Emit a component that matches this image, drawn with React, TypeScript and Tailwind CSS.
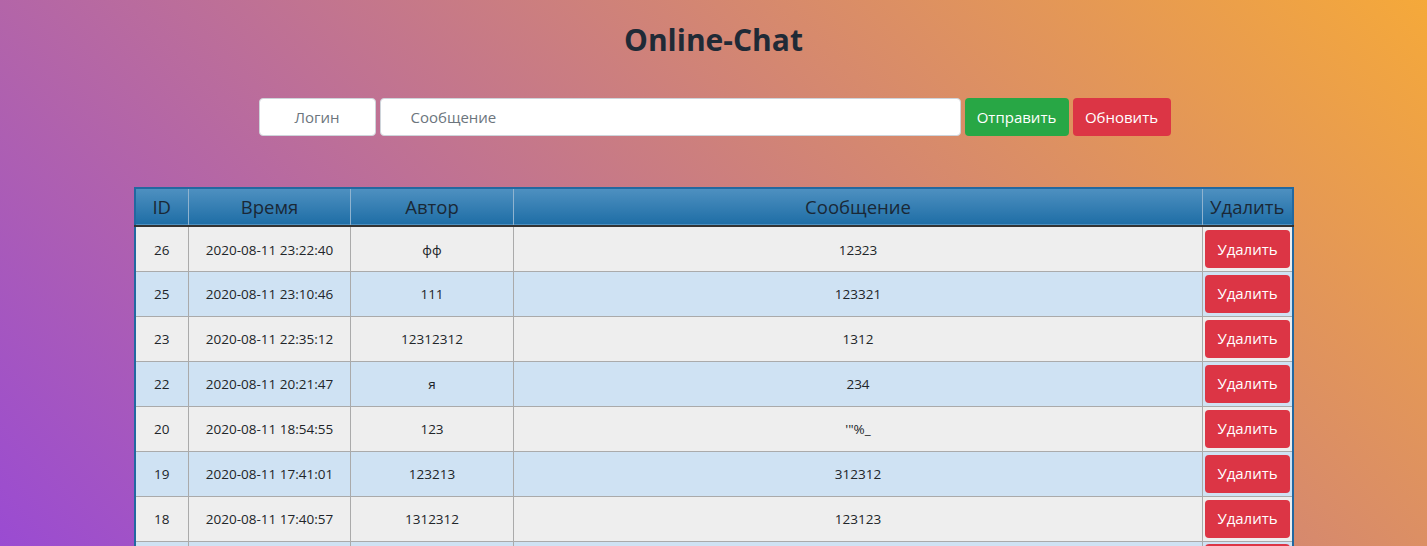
import React from "react";

interface Message {
  id: number;
  time: string;
  author: string;
  text: string;
}

const messages: Message[] = [
  { id: 26, time: "2020-08-11 23:22:40", author: "фф", text: "12323" },
  { id: 25, time: "2020-08-11 23:10:46", author: "111", text: "123321" },
  { id: 23, time: "2020-08-11 22:35:12", author: "12312312", text: "1312" },
  { id: 22, time: "2020-08-11 20:21:47", author: "я", text: "234" },
  { id: 20, time: "2020-08-11 18:54:55", author: "123", text: "'\"%_" },
  { id: 19, time: "2020-08-11 17:41:01", author: "123213", text: "312312" },
  { id: 18, time: "2020-08-11 17:40:57", author: "1312312", text: "123123" },
];

export default function App() {
  return (
    <div className="h-screen overflow-hidden bg-[linear-gradient(45deg,#9a4bd2,#f5a93a)] font-['Open_Sans',sans-serif] text-[#212529]">
      <h1 className="pt-[19px] text-center text-[30px] font-bold leading-[42px] text-[#1f2a36]">
        Online-Chat
      </h1>

      <div className="mt-[37px] flex justify-center gap-1 pl-[2px]">
        <input
          placeholder="Логин"
          className="h-[38px] w-[117px] rounded border border-[#ced4da] bg-white text-center text-[15px] text-[#495057] placeholder:text-[#6c757d] outline-none"
        />
        <input
          placeholder="Сообщение"
          className="h-[38px] w-[581px] rounded border border-[#ced4da] bg-white pl-[30px] text-[15px] text-[#495057] placeholder:text-[#6c757d] outline-none"
        />
        <button className="h-[38px] w-[104px] rounded bg-[#28a745] text-[15px] text-white">
          Отправить
        </button>
        <button className="h-[38px] w-[98px] rounded bg-[#dc3545] text-[15px] text-white">
          Обновить
        </button>
      </div>

      <div className="mx-auto mt-[51px] w-[1160px]">
        <table className="w-full table-fixed border-collapse border-2 border-[#2268a0]">
          <colgroup>
            <col className="w-[54px]" />
            <col className="w-[162px]" />
            <col className="w-[163px]" />
            <col />
            <col className="w-[90px]" />
          </colgroup>
          <thead>
            <tr className="h-[38px] border-b-2 border-[#333] bg-[linear-gradient(#4f91c1,#1f6ea6)] text-[18.5px] text-[#1a2836]">
              <th className="border-r border-[#8fb3cf] font-normal">ID</th>
              <th className="border-r border-[#8fb3cf] font-normal">Время</th>
              <th className="border-r border-[#8fb3cf] font-normal">Автор</th>
              <th className="border-r border-[#8fb3cf] font-normal">Сообщение</th>
              <th className="font-normal">Удалить</th>
            </tr>
          </thead>
          <tbody>
            {messages.map((m, i) => (
              <tr
                key={m.id}
                className={`h-[45px] border-b border-[#aaa] text-center text-[13.5px] ${
                  i % 2 === 0 ? "bg-[#eeeeee]" : "bg-[#cfe2f3]"
                }`}
              >
                <td className="border-r border-[#aaa] pt-[2px]">{m.id}</td>
                <td className="border-r border-[#aaa] pt-[2px]">{m.time}</td>
                <td className="border-r border-[#aaa] pt-[2px]">{m.author}</td>
                <td className="border-r border-[#aaa] pt-[2px]">{m.text}</td>
                <td className="px-[2px]">
                  <button className="h-[38px] w-[85px] rounded bg-[#dc3545] text-[15px] text-white">
                    Удалить
                  </button>
                </td>
              </tr>
            ))}
            {/* next row, only its top edge is visible */}
            <tr className="h-[45px] border-b border-[#aaa] bg-[#cfe2f3]">
              <td className="border-r border-[#aaa]" />
              <td className="border-r border-[#aaa]" />
              <td className="border-r border-[#aaa]" />
              <td className="border-r border-[#aaa]" />
              <td className="px-[2px]">
                <div className="h-[38px] w-[85px] rounded bg-[#dc3545]" />
              </td>
            </tr>
          </tbody>
        </table>
      </div>
    </div>
  );
}
